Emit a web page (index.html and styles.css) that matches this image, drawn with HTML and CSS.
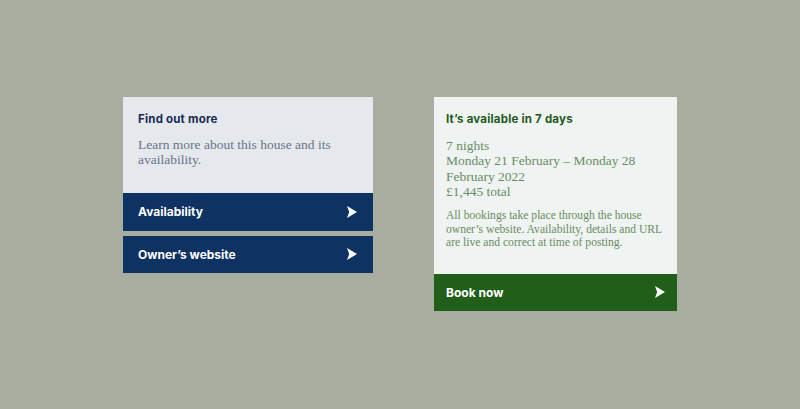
FILE: index.html
```html
<!DOCTYPE html>
<html lang="en">
<head>
    <meta charset="UTF-8">
    <meta name="viewport" content="width=device-width, initial-scale=1.0">
    <title>House availability</title>
    <link rel="stylesheet" href="styles.css">
</head>
<body>
    <div class="page">
        <!-- Find out more -->
        <section class="card card-info">
            <div class="card-body">
                <h2>Find out more</h2>
                <p>Learn more about this house and its availability.</p>
            </div>
            <a class="card-link" href="#">Availability
                <svg class="arrow" viewBox="0 0 10 12"><path d="M0 0 L10 6 L0 12 L2.2 6 Z"/></svg>
            </a>
            <a class="card-link" href="#">Owner’s website
                <svg class="arrow" viewBox="0 0 10 12"><path d="M0 0 L10 6 L0 12 L2.2 6 Z"/></svg>
            </a>
        </section>

        <!-- Booking -->
        <section class="card card-book">
            <div class="card-body">
                <h2>It’s available in 7 days</h2>
                <p>7 nights<br>Monday 21 February – Monday 28 February 2022<br>£1,445 total</p>
                <p class="small">All bookings take place through the house owner’s website. Availability, details and URL are live and correct at time of posting.</p>
            </div>
            <a class="card-link" href="#">Book now
                <svg class="arrow" viewBox="0 0 10 12"><path d="M0 0 L10 6 L0 12 L2.2 6 Z"/></svg>
            </a>
        </section>
    </div>
</body>
</html>
```

FILE: styles.css
```css
body {
    margin: 0;
    background: #a8ae9f;
    font-family: "Liberation Serif", serif;
}
.page {
    display: flex;
    justify-content: center;
    align-items: flex-start;
    gap: 61px;
    padding-top: 97px;
}
.card h2 {
    font-family: "Inter", sans-serif;
    font-size: 11.5px;
    font-weight: 700;
    line-height: 16px;
    letter-spacing: 0.2px;
    margin: 0;
}
.card p {
    margin: 0;
    font-size: 13.5px;
    line-height: 15.3px;
}
.card-link {
    display: flex;
    justify-content: space-between;
    align-items: center;
    height: 38px;
    color: white;
    text-decoration: none;
    font-family: "Inter", sans-serif;
    font-size: 12px;
    font-weight: 700;
}
.arrow {
    width: 10px;
    height: 12px;
    fill: white;
}

/* left card */
.card-info {
    width: 250px;
}
.card-info .card-body {
    background: #e5e8ed;
    padding: 14px 15px 25px;
}
.card-info h2 {
    color: #1b2a55;
    margin-bottom: 10px;
}
.card-info p {
    color: #6b7389;
}
.card-info .card-link {
    background: #0e3363;
    padding: 0 16px 0 15px;
}
.card-info .card-link + .card-link {
    margin-top: 5px;
    height: 37px;
}

/* right card */
.card-book {
    width: 243px;
}
.card-book .card-body {
    background: #eff3f2;
    padding: 14px 12px 24px;
}
.card-book h2 {
    color: #1f5a1c;
    margin-bottom: 11px;
}
.card-book p {
    color: #6a8c64;
}
.card-book p.small {
    font-size: 11.6px;
    line-height: 13.6px;
    margin-top: 10px;
}
.card-book .card-link {
    background: #215e19;
    padding: 0 12px;
    height: 37px;
}
```
